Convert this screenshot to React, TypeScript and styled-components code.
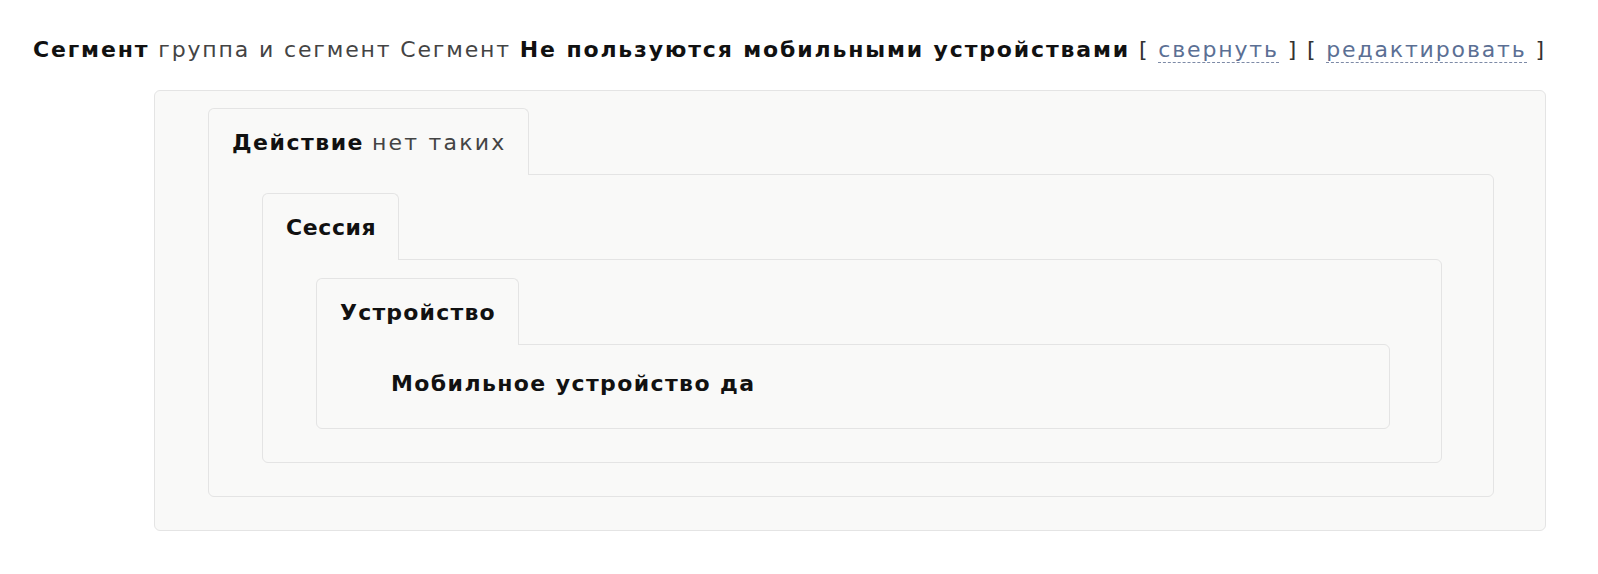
import React from "react";
import styled, { createGlobalStyle } from "styled-components";

const Global = createGlobalStyle`
  html, body { margin: 0; padding: 0; background: #ffffff; }
  body { font-family: "DejaVu Sans", "Open Sans", sans-serif; color: #111; }
`;

const Page = styled.div`
  width: 1598px;
  height: 574px;
  box-sizing: border-box;
  padding: 34px 0 0 33px;
  display: flex;
  flex-direction: column;
`;

const Header = styled.div`
  font-size: 22px;
  line-height: 32px;
  letter-spacing: 1.85px;
  color: #444;
  white-space: nowrap;
`;

const B = styled.b`
  font-weight: 700;
  color: #111;
`;

const Bracket = styled.span`
  color: #333;
`;

const Link = styled.a`
  color: #5b6f94;
  text-decoration: none;
  border-bottom: 1px dashed #7d8aa6;
  cursor: pointer;
`;

const Frame = styled.div`
  box-sizing: border-box;
  background: #f9f9f8;
  border: 1px solid #e4e4e4;
  border-radius: 6px;
  padding: 17px 51px 33px 53px;
`;

const Outer = styled(Frame)`
  margin: 24px 0 0 121px;
  width: 1392px;
`;

const Block = styled.div`
  display: flex;
  flex-direction: column;
  align-items: flex-start;
`;

const Tab = styled.div<{ $spacing?: number }>`
  position: relative;
  z-index: 1;
  margin-bottom: -1px;
  box-sizing: border-box;
  height: 67px;
  padding: 0 22px 0 23px;
  display: flex;
  align-items: center;
  background: #f9f9f8;
  border: 1px solid #e4e4e4;
  border-bottom: none;
  border-radius: 6px 6px 0 0;
  font-size: 22px;
  font-weight: 700;
  letter-spacing: ${(p) => p.$spacing ?? 1.5}px;
  color: #111;
  white-space: nowrap;
`;

const TabNote = styled.span`
  font-weight: 400;
  color: #444;
  margin-left: 8px;
  letter-spacing: 2.2px;
`;

const Body = styled(Frame)`
  align-self: stretch;
  border-top-left-radius: 0;
  padding-top: 18px;
`;

const Leaf = styled.div`
  box-sizing: border-box;
  align-self: stretch;
  height: 85px;
  background: #f9f9f8;
  border: 1px solid #e4e4e4;
  border-radius: 0 6px 6px 6px;
  padding: 0 0 6px 74px;
  display: flex;
  align-items: center;
  font-size: 22px;
  font-weight: 700;
  letter-spacing: 1.4px;
  color: #111;
`;

export default function App() {
  return (
    <>
      <Global />
      <Page>
        <Header>
          <B>Сегмент</B> группа и сегмент Сегмент <B>Не пользуются мобильными устройствами</B>{" "}
          <Bracket>[</Bracket> <Link>свернуть</Link> <Bracket>]</Bracket>{" "}
          <Bracket>[</Bracket> <Link>редактировать</Link> <Bracket>]</Bracket>
        </Header>
        <Outer>
          <Block>
            <Tab>
              Действие<TabNote>нет таких</TabNote>
            </Tab>
            <Body>
              <Block>
                <Tab $spacing={0.6}>Сессия</Tab>
                <Body>
                  <Block>
                    <Tab $spacing={1.2}>Устройство</Tab>
                    <Leaf>Мобильное устройство да</Leaf>
                  </Block>
                </Body>
              </Block>
            </Body>
          </Block>
        </Outer>
      </Page>
    </>
  );
}
